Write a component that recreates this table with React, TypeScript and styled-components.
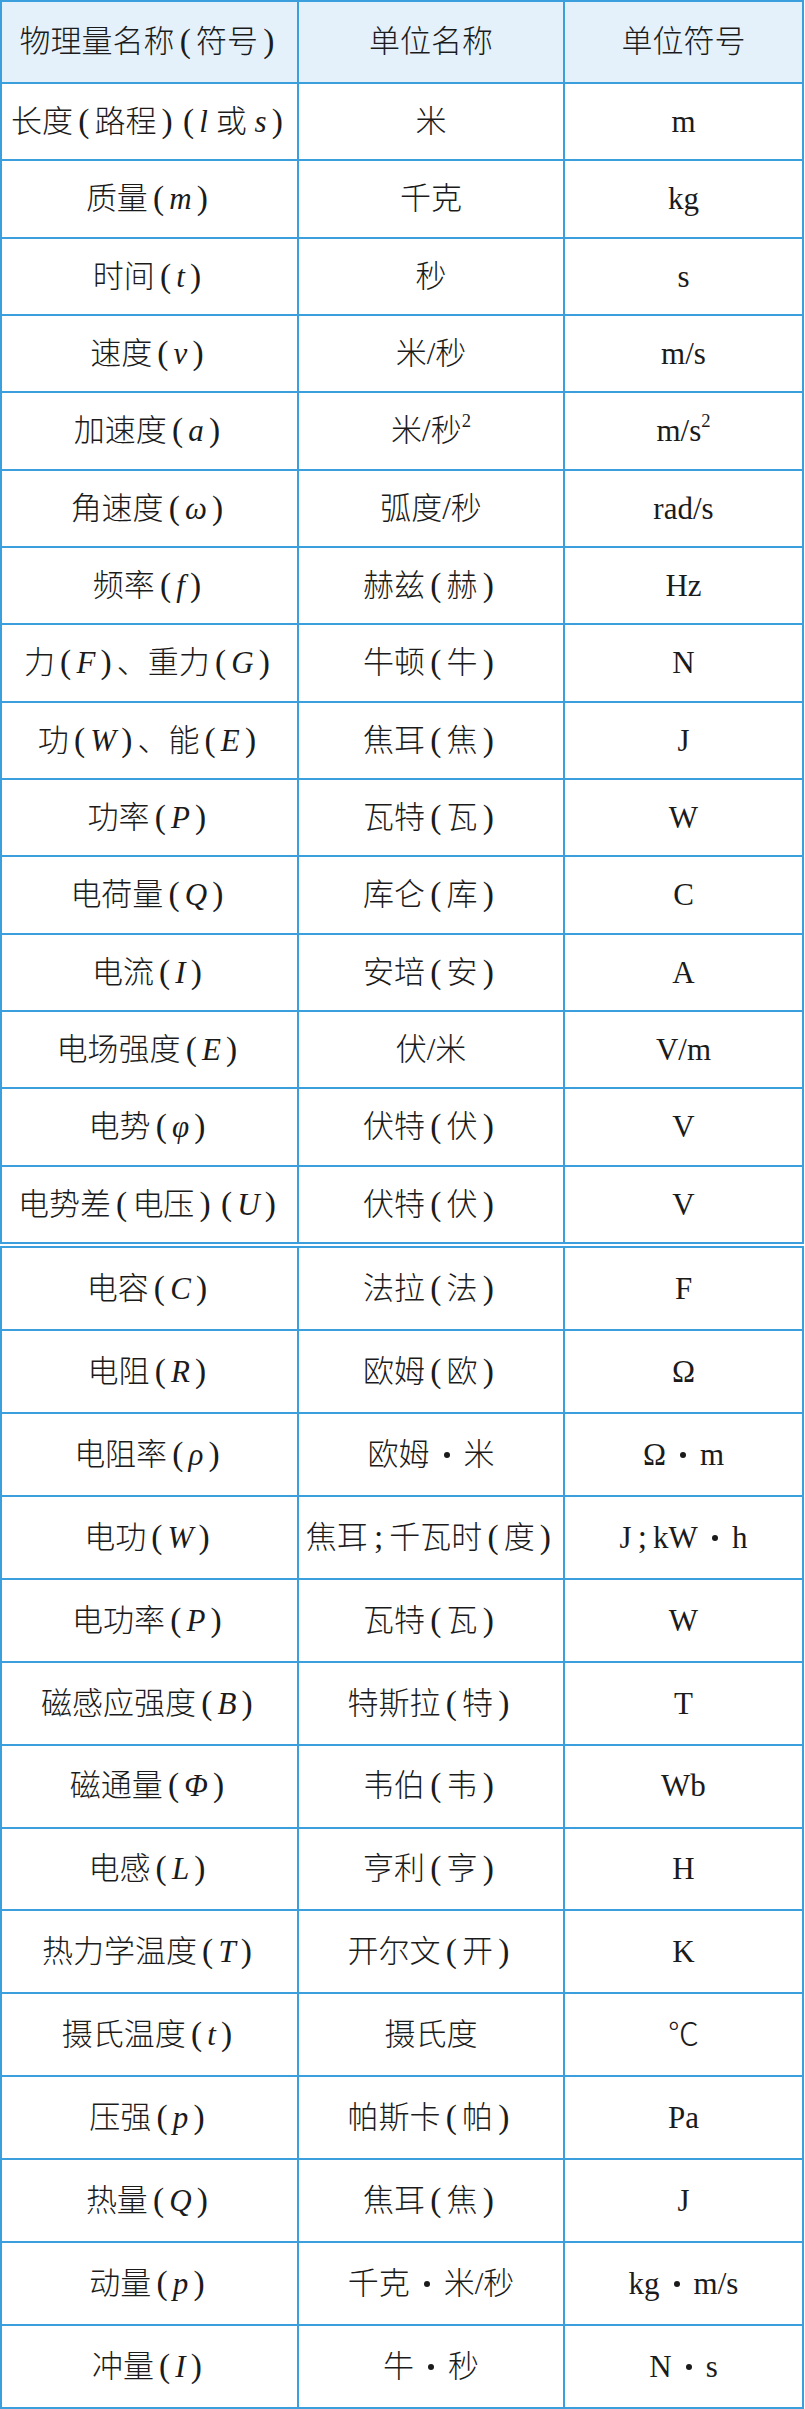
import React from "react";
import styled, { createGlobalStyle } from "styled-components";

const LINE = "#3a9fdc";
const HEAD_BG = "#e4f1fb";

const GlobalStyle = createGlobalStyle`
  html, body {
    margin: 0;
    padding: 0;
    background: #ffffff;
  }
  body {
    font-family: "Liberation Serif", "Noto Sans CJK SC", serif;
    color: #1b1b1b;
  }
`;

const Page = styled.div`
  width: 804px;
  display: flex;
  flex-direction: column;
  gap: 2px;
`;

const Section = styled.div<{ $height: number; $rows: string }>`
  box-sizing: border-box;
  height: ${(p) => p.$height}px;
  display: grid;
  grid-template-columns: 295px 264px 237px;
  grid-template-rows: ${(p) => p.$rows};
  gap: 2px;
  padding: 2px;
  background: ${LINE};
`;

const Cell = styled.div<{ $head?: boolean }>`
  background: ${(p) => (p.$head ? HEAD_BG : "#ffffff")};
  display: flex;
  align-items: center;
  justify-content: center;
`;

const Text = styled.span`
  display: block;
  font-size: 31px;
  font-weight: 300;
  line-height: 1.2;
  white-space: pre;
`;

const Sym = styled.span`
  font-family: "Liberation Serif", serif;
  font-style: italic;
  font-weight: 400;
`;

const Punct = styled.span`
  display: inline-block;
  width: 0.64em;
  text-align: center;
  font-family: "Liberation Serif", serif;
  font-weight: 400;
  font-size: 1.08em;
  line-height: 1;
`;

const Dot = styled.span`
  display: inline-block;
  width: 6px;
  height: 6px;
  margin: 0 14px;
  border-radius: 50%;
  background: #1b1b1b;
  vertical-align: 0.22em;
`;

const Sup = styled.span`
  font-family: "Liberation Serif", serif;
  font-size: 0.6em;
  vertical-align: 0.75em;
  line-height: 0;
`;

// tiny markup: *x* italic symbol, ( ) ; punctuation slot, • dot, ^2 superscript
function rich(src: string): React.ReactNode[] {
  const out: React.ReactNode[] = [];
  let buf = "";
  let i = 0;
  const flush = () => {
    if (buf) {
      out.push(buf);
      buf = "";
    }
  };
  while (i < src.length) {
    const ch = src[i];
    if (ch === "*") {
      const end = src.indexOf("*", i + 1);
      flush();
      out.push(<Sym key={i}>{src.slice(i + 1, end)}</Sym>);
      i = end + 1;
      continue;
    }
    if (ch === "(" || ch === ")" || ch === ";") {
      flush();
      out.push(<Punct key={i}>{ch}</Punct>);
      i++;
      continue;
    }
    if (ch === "•") {
      flush();
      out.push(<Dot key={i} />);
      i++;
      continue;
    }
    if (ch === "^") {
      flush();
      out.push(<Sup key={i}>{src[i + 1]}</Sup>);
      i += 2;
      continue;
    }
    buf += ch;
    i++;
  }
  flush();
  return out;
}

const header = ["物理量名称(符号)", "单位名称", "单位符号"];

const topRows: string[][] = [
  ["长度(路程)(*l* 或 *s*)", "米", "m"],
  ["质量(*m*)", "千克", "kg"],
  ["时间(*t*)", "秒", "s"],
  ["速度(*v*)", "米/秒", "m/s"],
  ["加速度(*a*)", "米/秒^2", "m/s^2"],
  ["角速度(*ω*)", "弧度/秒", "rad/s"],
  ["频率(*f*)", "赫兹(赫)", "Hz"],
  ["力(*F*)、重力(*G*)", "牛顿(牛)", "N"],
  ["功(*W*)、能(*E*)", "焦耳(焦)", "J"],
  ["功率(*P*)", "瓦特(瓦)", "W"],
  ["电荷量(*Q*)", "库仑(库)", "C"],
  ["电流(*I*)", "安培(安)", "A"],
  ["电场强度(*E*)", "伏/米", "V/m"],
  ["电势(*φ*)", "伏特(伏)", "V"],
  ["电势差(电压)(*U*)", "伏特(伏)", "V"],
];

const bottomRows: string[][] = [
  ["电容(*C*)", "法拉(法)", "F"],
  ["电阻(*R*)", "欧姆(欧)", "Ω"],
  ["电阻率(*ρ*)", "欧姆•米", "Ω•m"],
  ["电功(*W*)", "焦耳;千瓦时(度)", "J;kW•h"],
  ["电功率(*P*)", "瓦特(瓦)", "W"],
  ["磁感应强度(*B*)", "特斯拉(特)", "T"],
  ["磁通量(*Φ*)", "韦伯(韦)", "Wb"],
  ["电感(*L*)", "亨利(亨)", "H"],
  ["热力学温度(*T*)", "开尔文(开)", "K"],
  ["摄氏温度(*t*)", "摄氏度", "℃"],
  ["压强(*p*)", "帕斯卡(帕)", "Pa"],
  ["热量(*Q*)", "焦耳(焦)", "J"],
  ["动量(*p*)", "千克•米/秒", "kg•m/s"],
  ["冲量(*I*)", "牛•秒", "N•s"],
];

export default function App() {
  return (
    <>
      <GlobalStyle />
      <Page>
        <Section $height={1244} $rows="80px repeat(15, 1fr)">
          {header.map((h, i) => (
            <Cell $head key={"h" + i}>
              <Text>{rich(h)}</Text>
            </Cell>
          ))}
          {topRows.map((row, r) =>
            row.map((c, i) => (
              <Cell key={r + "-" + i}>
                <Text>{rich(c)}</Text>
              </Cell>
            ))
          )}
        </Section>
        <Section $height={1163} $rows="repeat(14, 1fr)">
          {bottomRows.map((row, r) =>
            row.map((c, i) => (
              <Cell key={r + "-" + i}>
                <Text>{rich(c)}</Text>
              </Cell>
            ))
          )}
        </Section>
      </Page>
    </>
  );
}
